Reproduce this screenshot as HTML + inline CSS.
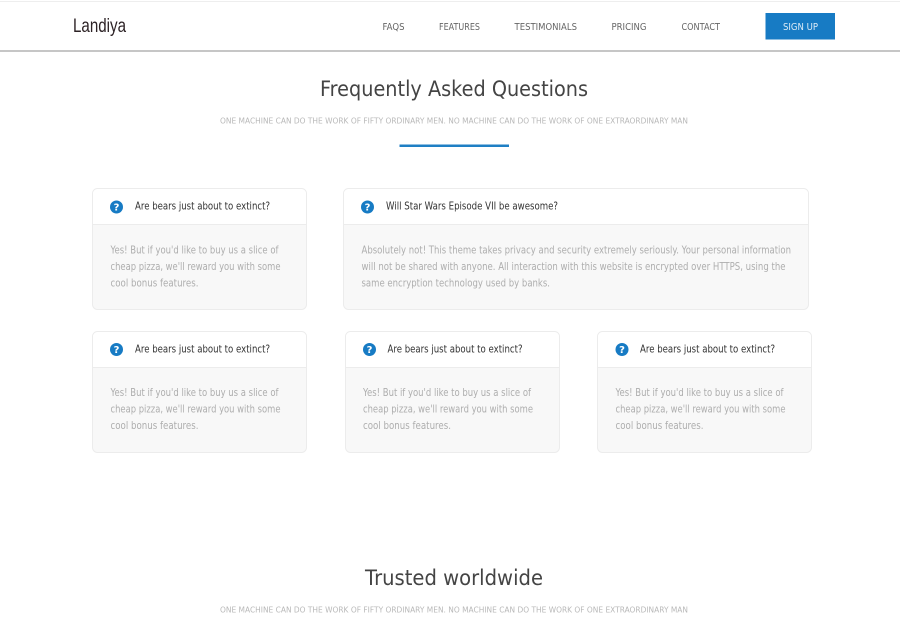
<!DOCTYPE html>
<html><head><meta charset="utf-8"><title>Landiya</title>
<style>
html,body{margin:0;padding:0;background:#fff;width:900px;height:623px;overflow:hidden}
svg{display:block}
text{font-family:"DejaVu Sans","Liberation Sans",sans-serif}
.l{font-family:"Liberation Sans",sans-serif;font-size:19.5px;fill:#2c2225}
.n{font-size:9.8px;fill:#666}
.s{font-size:8.2px;fill:#b8b8b8}
.h{font-size:21.5px;fill:#444}
.t{font-size:10.2px;fill:#333}
.b{font-size:10.2px;fill:#aeaeae}
.q{font-size:10px;font-weight:bold;fill:#fff;text-anchor:middle}
</style></head><body>
<svg xmlns="http://www.w3.org/2000/svg" width="900" height="623" viewBox="0 0 900 623">
<rect width="900" height="623" fill="#fff"/>
<rect x="0" y="1" width="900" height="1" fill="#eeeeee"/>
<rect x="0" y="50" width="900" height="2" fill="#c6c6c6"/>
<text class="l" x="73" y="32" textLength="53" lengthAdjust="spacingAndGlyphs">Landiya</text>
<text class="n" x="382.5" y="30" textLength="22" lengthAdjust="spacingAndGlyphs">FAQS</text>
<text class="n" x="439" y="30" textLength="41" lengthAdjust="spacingAndGlyphs">FEATURES</text>
<text class="n" x="514.5" y="30" textLength="62.5" lengthAdjust="spacingAndGlyphs">TESTIMONIALS</text>
<text class="n" x="611.5" y="30" textLength="35" lengthAdjust="spacingAndGlyphs">PRICING</text>
<text class="n" x="681.5" y="30" textLength="38.5" lengthAdjust="spacingAndGlyphs">CONTACT</text>
<rect x="765.5" y="13" width="69.5" height="26.5" fill="#177bc4"/>
<text x="783" y="30" font-size="9.8" fill="#dcebf6" textLength="35" lengthAdjust="spacingAndGlyphs">SIGN UP</text>

<text class="h" x="320" y="96" textLength="268" lengthAdjust="spacingAndGlyphs">Frequently Asked Questions</text>
<text class="s" x="220" y="123.5" textLength="468" lengthAdjust="spacingAndGlyphs">ONE MACHINE CAN DO THE WORK OF FIFTY ORDINARY MEN. NO MACHINE CAN DO THE WORK OF ONE EXTRAORDINARY MAN</text>
<rect x="399.5" y="144.5" width="109.5" height="2.5" fill="#1f7fc4"/>

<!-- Card 1 -->
<rect x="92.5" y="188.5" width="214" height="121" rx="5" fill="#f8f8f8" stroke="#ececec"/>
<path d="M93 224V193.5a4.5 4.5 0 0 1 4.5-4.5H301.500a4.500 4.500 0 0 1 4.500 4.500V224Z" fill="#fff"/>
<rect x="93" y="224" width="213" height="1" fill="#ececec"/>
<circle cx="116.5" cy="207" r="6.5" fill="#177bc4"/>
<text class="q" x="116.5" y="210.5">?</text>
<text class="t" x="135" y="209.5" textLength="135" lengthAdjust="spacingAndGlyphs">Are bears just about to extinct?</text>
<text class="b" x="110.5" y="253.5" textLength="168" lengthAdjust="spacingAndGlyphs">Yes! But if you'd like to buy us a slice of</text>
<text class="b" x="110.5" y="270" textLength="170" lengthAdjust="spacingAndGlyphs">cheap pizza, we'll reward you with some</text>
<text class="b" x="110.5" y="286.5" textLength="88" lengthAdjust="spacingAndGlyphs">cool bonus features.</text>

<!-- Card 2 -->
<rect x="343.5" y="188.5" width="465" height="121" rx="5" fill="#f8f8f8" stroke="#ececec"/>
<path d="M344 224V193.5a4.5 4.5 0 0 1 4.5-4.5H803.5a4.5 4.5 0 0 1 4.5 4.5V224Z" fill="#fff"/>
<rect x="344" y="224" width="464" height="1" fill="#ececec"/>
<circle cx="367.5" cy="207" r="6.5" fill="#177bc4"/>
<text class="q" x="367.5" y="210.5">?</text>
<text class="t" x="386" y="209.5" textLength="172" lengthAdjust="spacingAndGlyphs">Will Star Wars Episode VII be awesome?</text>
<text class="b" x="361.5" y="253.5" textLength="429.5" lengthAdjust="spacingAndGlyphs">Absolutely not! This theme takes privacy and security extremely seriously. Your personal information</text>
<text class="b" x="361.5" y="270" textLength="424" lengthAdjust="spacingAndGlyphs">will not be shared with anyone. All interaction with this website is encrypted over HTTPS, using the</text>
<text class="b" x="361.5" y="286.5" textLength="188.5" lengthAdjust="spacingAndGlyphs">same encryption technology used by banks.</text>

<!-- Card 3 -->
<rect x="92.5" y="331.5" width="214" height="121" rx="5" fill="#f8f8f8" stroke="#ececec"/>
<path d="M93 367V336.5a4.5 4.5 0 0 1 4.5-4.5H301.5a4.5 4.5 0 0 1 4.5 4.5V367Z" fill="#fff"/>
<rect x="93" y="367" width="213" height="1" fill="#ececec"/>
<circle cx="116.5" cy="349.5" r="6.5" fill="#177bc4"/>
<text class="q" x="116.5" y="353">?</text>
<text class="t" x="135" y="352.5" textLength="135" lengthAdjust="spacingAndGlyphs">Are bears just about to extinct?</text>
<text class="b" x="110.5" y="396" textLength="168" lengthAdjust="spacingAndGlyphs">Yes! But if you'd like to buy us a slice of</text>
<text class="b" x="110.5" y="412.5" textLength="170" lengthAdjust="spacingAndGlyphs">cheap pizza, we'll reward you with some</text>
<text class="b" x="110.5" y="429" textLength="88" lengthAdjust="spacingAndGlyphs">cool bonus features.</text>

<!-- Card 4 -->
<rect x="345.5" y="331.5" width="214" height="121" rx="5" fill="#f8f8f8" stroke="#ececec"/>
<path d="M346 367V336.5a4.5 4.5 0 0 1 4.5-4.5H554.5a4.5 4.5 0 0 1 4.5 4.5V367Z" fill="#fff"/>
<rect x="346" y="367" width="213" height="1" fill="#ececec"/>
<circle cx="369.5" cy="349.5" r="6.5" fill="#177bc4"/>
<text class="q" x="369.5" y="353">?</text>
<text class="t" x="387.5" y="352.5" textLength="135" lengthAdjust="spacingAndGlyphs">Are bears just about to extinct?</text>
<text class="b" x="363" y="396" textLength="168" lengthAdjust="spacingAndGlyphs">Yes! But if you'd like to buy us a slice of</text>
<text class="b" x="363" y="412.5" textLength="170" lengthAdjust="spacingAndGlyphs">cheap pizza, we'll reward you with some</text>
<text class="b" x="363" y="429" textLength="88" lengthAdjust="spacingAndGlyphs">cool bonus features.</text>

<!-- Card 5 -->
<rect x="597.5" y="331.5" width="214" height="121" rx="5" fill="#f8f8f8" stroke="#ececec"/>
<path d="M598 367V336.5a4.5 4.5 0 0 1 4.5-4.5H806.5a4.5 4.5 0 0 1 4.5 4.5V367Z" fill="#fff"/>
<rect x="598" y="367" width="213" height="1" fill="#ececec"/>
<circle cx="622" cy="349.5" r="6.5" fill="#177bc4"/>
<text class="q" x="622" y="353">?</text>
<text class="t" x="640" y="352.5" textLength="135" lengthAdjust="spacingAndGlyphs">Are bears just about to extinct?</text>
<text class="b" x="615.5" y="396" textLength="168" lengthAdjust="spacingAndGlyphs">Yes! But if you'd like to buy us a slice of</text>
<text class="b" x="615.5" y="412.5" textLength="170" lengthAdjust="spacingAndGlyphs">cheap pizza, we'll reward you with some</text>
<text class="b" x="615.5" y="429" textLength="88" lengthAdjust="spacingAndGlyphs">cool bonus features.</text>

<text class="h" x="365" y="585" textLength="178" lengthAdjust="spacingAndGlyphs">Trusted worldwide</text>
<text class="s" x="220" y="612.5" textLength="468" lengthAdjust="spacingAndGlyphs">ONE MACHINE CAN DO THE WORK OF FIFTY ORDINARY MEN. NO MACHINE CAN DO THE WORK OF ONE EXTRAORDINARY MAN</text>
</svg>
</body></html>
